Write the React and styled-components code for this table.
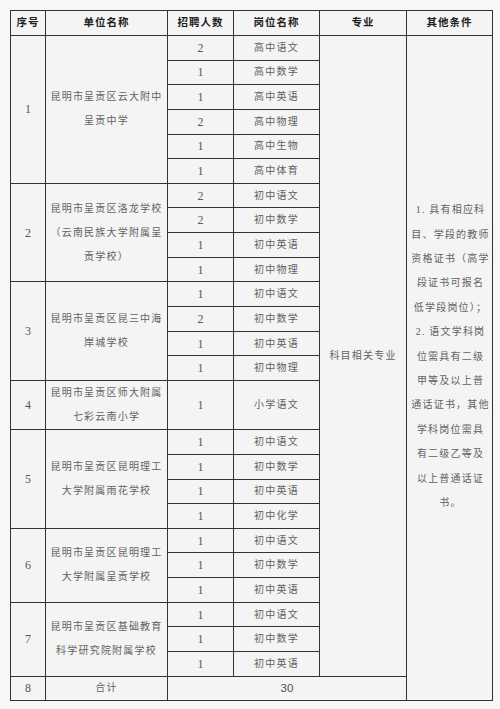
import React from 'react';
import styled, { createGlobalStyle } from 'styled-components';

const GlobalStyle = createGlobalStyle`
  html, body {
    margin: 0;
    padding: 0;
    background: #f7f7f7;
  }
  body {
    font-family: 'Liberation Serif', 'Noto Sans CJK SC', serif;
  }
`;

const Page = styled.div`
  padding: 10px 8px 9px 10px;
`;

const Table = styled.table`
  width: 482px;
  table-layout: fixed;
  border-collapse: collapse;
  background: #f4f4f4;
  border: 1.5px solid #2e2e2e;
`;

const HeadCell = styled.th`
  height: 24px;
  padding: 0;
  border: 1px solid #333;
  font-family: 'Liberation Serif', 'Noto Sans CJK SC', serif;
  font-size: 10.5px;
  font-weight: 700;
  letter-spacing: 1px;
  line-height: 16px;
  color: #1e1e1e;
  text-align: center;
  vertical-align: middle;
`;

const Row = styled.tr`
  height: ${p => (p.$tall ? 49.3 : 24.65)}px;
`;

const TotalRow = styled.tr`
  height: 24px;
`;

const Cell = styled.td`
  padding: 0;
  border: 1px solid #333;
  font-family: 'Liberation Serif', 'Noto Sans CJK SC', serif;
  font-size: 10px;
  letter-spacing: 1.2px;
  line-height: 16px;
  color: #626262;
  text-align: center;
  vertical-align: middle;
`;

const NameCell = styled(Cell)`
  line-height: 24px;
`;

const NumberCell = styled(Cell)`
  font-size: 12px;
  letter-spacing: 0;
  color: #555;
`;

const TotalCell = styled(Cell)`
  font-family: 'Liberation Sans', sans-serif;
  font-size: 11.5px;
  letter-spacing: 0;
  color: #3d5a5a;
`;

const ConditionCell = styled(Cell)`
  padding: 0 2px 22px 4px;
  line-height: 24.4px;
`;

const Line = styled.span`
  display: block;
  white-space: nowrap;
`;

const sections = [
  {
    no: 1,
    name: ['昆明市呈贡区云大附中', '呈贡中学'],
    posts: [[2, '高中语文'], [1, '高中数学'], [1, '高中英语'], [2, '高中物理'], [1, '高中生物'], [1, '高中体育']],
  },
  {
    no: 2,
    name: ['昆明市呈贡区洛龙学校', '（云南民族大学附属呈', '贡学校）'],
    posts: [[2, '初中语文'], [2, '初中数学'], [1, '初中英语'], [1, '初中物理']],
  },
  {
    no: 3,
    name: ['昆明市呈贡区昆三中海', '岸城学校'],
    posts: [[1, '初中语文'], [2, '初中数学'], [1, '初中英语'], [1, '初中物理']],
  },
  {
    no: 4,
    name: ['昆明市呈贡区师大附属', '七彩云南小学'],
    posts: [[1, '小学语文']],
    tall: true,
  },
  {
    no: 5,
    name: ['昆明市呈贡区昆明理工', '大学附属雨花学校'],
    posts: [[1, '初中语文'], [1, '初中数学'], [1, '初中英语'], [1, '初中化学']],
  },
  {
    no: 6,
    name: ['昆明市呈贡区昆明理工', '大学附属呈贡学校'],
    posts: [[1, '初中语文'], [1, '初中数学'], [1, '初中英语']],
  },
  {
    no: 7,
    name: ['昆明市呈贡区基础教育', '科学研究院附属学校'],
    posts: [[1, '初中语文'], [1, '初中数学'], [1, '初中英语']],
  },
];

const conditionLines = [
  '1. 具有相应科',
  '目、学段的教师',
  '资格证书（高学',
  '段证书可报名',
  '低学段岗位）；',
  '2. 语文学科岗',
  '位需具有二级',
  '甲等及以上普',
  '通话证书，其他',
  '学科岗位需具',
  '有二级乙等及',
  '以上普通话证',
  '书。',
];

const bodyRowCount = sections.reduce((n, s) => n + s.posts.length, 0);

export default function App() {
  let first = true;
  const rows = [];

  sections.forEach(section => {
    section.posts.forEach(([count, post], i) => {
      rows.push(
        <Row key={`${section.no}-${i}`} $tall={section.tall}>
          {i === 0 && (
            <>
              <NumberCell rowSpan={section.posts.length}>{section.no}</NumberCell>
              <NameCell rowSpan={section.posts.length}>
                {section.name.map(line => (
                  <Line key={line}>{line}</Line>
                ))}
              </NameCell>
            </>
          )}
          <NumberCell>{count}</NumberCell>
          <Cell>{post}</Cell>
          {first && (
            <>
              <Cell rowSpan={bodyRowCount}>科目相关专业</Cell>
              <ConditionCell rowSpan={bodyRowCount + 1}>
                {conditionLines.map(line => (
                  <Line key={line}>{line}</Line>
                ))}
              </ConditionCell>
            </>
          )}
        </Row>
      );
      first = false;
    });
  });

  return (
    <Page>
      <GlobalStyle />
      <Table>
        <colgroup>
          <col style={{ width: 35 }} />
          <col style={{ width: 122 }} />
          <col style={{ width: 66 }} />
          <col style={{ width: 86 }} />
          <col style={{ width: 87 }} />
          <col style={{ width: 86 }} />
        </colgroup>
        <thead>
          <tr>
            <HeadCell>序号</HeadCell>
            <HeadCell>单位名称</HeadCell>
            <HeadCell>招聘人数</HeadCell>
            <HeadCell>岗位名称</HeadCell>
            <HeadCell>专业</HeadCell>
            <HeadCell>其他条件</HeadCell>
          </tr>
        </thead>
        <tbody>
          {rows}
          <TotalRow>
            <NumberCell>8</NumberCell>
            <Cell>合计</Cell>
            <TotalCell colSpan={3}>30</TotalCell>
          </TotalRow>
        </tbody>
      </Table>
    </Page>
  );
}
